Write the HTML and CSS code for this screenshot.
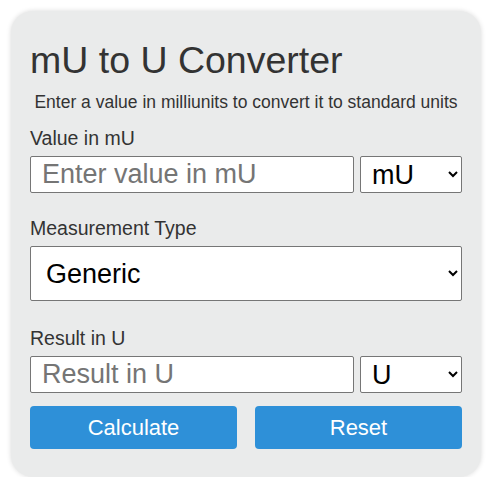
FILE: index.html
```html
<!DOCTYPE html>
<html lang="en">
<head>
  <meta charset="UTF-8">
  <meta name="viewport" content="width=device-width, initial-scale=1.0">
  <title>mU to U Converter</title>
  <link rel="stylesheet" href="styles.css">
</head>
<body>

  <!-- Converter -->
  <div class="converter">
    <h1>mU to U Converter</h1>
    <p class="intro">Enter a value in milliunits to convert it to standard units</p>

    <label for="value">Value in mU</label>
    <div class="row">
      <input type="text" id="value" placeholder="Enter value in mU">
      <select id="from-unit">
        <option>mU</option>
      </select>
    </div>

    <label for="type" class="type-label">Measurement Type</label>
    <select id="type" class="type-select">
      <option>Generic</option>
    </select>

    <label for="result" class="result-label">Result in U</label>
    <div class="row">
      <input type="text" id="result" placeholder="Result in U" readonly>
      <select id="to-unit">
        <option>U</option>
      </select>
    </div>

    <div class="buttons">
      <button onclick="calculate()">Calculate</button>
      <button onclick="resetForm()">Reset</button>
    </div>
  </div>

  <script>
    function calculate() {
      let v = parseFloat(document.getElementById("value").value);
      if (isNaN(v)) {
        document.getElementById("result").value = "";
        return;
      }
      document.getElementById("result").value = v / 1000;
    }

    function resetForm() {
      document.getElementById("value").value = "";
      document.getElementById("result").value = "";
    }
  </script>
</body>
</html>
```

FILE: styles.css
```css
body {
  font-family: "Liberation Sans", Arial, sans-serif;
  margin: 0;
  padding: 11px 9px 0 11px;
  background-color: #fff;
  color: #333;
}

/* Karte */
.converter {
  width: 432px;
  height: 428px;
  padding: 25px 19px 13px 19px;
  background-color: #eaebeb;
  border-radius: 22px;
  box-shadow: 0 0 5px rgba(0, 0, 0, 0.15);
}

h1 {
  font-size: 37.5px;
  font-weight: normal;
  margin: 0;
  line-height: 48px;
}

.intro {
  font-size: 17.5px;
  text-align: center;
  margin: 8px 0 14px 0;
}

label {
  display: block;
  font-size: 19.5px;
  margin-bottom: 6px;
}

.row {
  display: flex;
  gap: 6px;
}

input, select {
  font-family: "Liberation Sans", Arial, sans-serif;
  font-size: 27px;
  box-sizing: border-box;
  border: 1px solid #767676;
  background-color: #fff;
  color: #000;
  height: 37px;
  border-radius: 2px;
}

input {
  flex: 1;
  min-width: 0;
  padding: 0 11px;
}

input::placeholder {
  color: #757575;
}

.row select {
  flex: 0 0 102px;
  width: 102px;
  padding: 0 6px 0 7px;
}

.type-label {
  margin-top: 24px;
}

.type-select {
  width: 100%;
  height: 55px;
  padding: 0 10px 0 11px;
}

.result-label {
  margin-top: 26px;
}

.buttons {
  display: flex;
  gap: 18px;
  margin-top: 13px;
}

button {
  flex: 1;
  height: 43px;
  font-family: "Liberation Sans", Arial, sans-serif;
  font-size: 22px;
  background-color: #2e90d8;
  color: #fff;
  border: none;
  border-radius: 4px;
  cursor: pointer;
}

button:hover {
  background-color: #2479b8;
}
```
